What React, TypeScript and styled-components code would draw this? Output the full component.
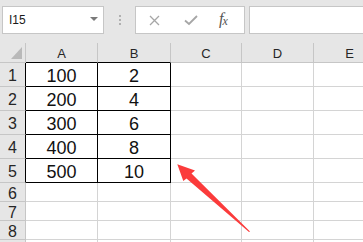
import styled, { createGlobalStyle } from "styled-components";

const GlobalStyle = createGlobalStyle`
  html, body {
    margin: 0;
    padding: 0;
    width: 363px;
    height: 242px;
    overflow: hidden;
    background: #ffffff;
    font-family: "Liberation Sans", Arial, sans-serif;
  }
`

const Page = styled.div`
  position: relative;
  width: 363px;
  height: 242px;
  overflow: hidden;
`

const Toolbar = styled.div`
  display: flex;
  align-items: flex-start;
  height: 43px;
  padding: 6px 0 0 2px;
  box-sizing: border-box;
  background: #e6e6e6;
`

const NameBox = styled.div`
  display: flex;
  align-items: center;
  justify-content: space-between;
  width: 102px;
  height: 28px;
  box-sizing: border-box;
  padding: 0 5px 0 6px;
  background: #ffffff;
  border: 1px solid #c6c6c6;
  font-size: 12px;
  color: #1a1a1a;
`

const Caret = styled.span`
  width: 0;
  height: 0;
  border-left: 4px solid transparent;
  border-right: 4px solid transparent;
  border-top: 4px solid #7a7a7a;
  margin-top: -2px;
`

const Grip = styled.div`
  display: flex;
  flex-direction: column;
  align-items: center;
  gap: 2px;
  width: 31px;
  padding-top: 9px;
  span {
    width: 2px;
    height: 2px;
    background: #b0b0b0;
  }
`

const IconBox = styled.div`
  display: flex;
  align-items: center;
  width: 110px;
  height: 28px;
  box-sizing: border-box;
  padding: 0 0 0 13px;
  background: #ffffff;
  border: 1px solid #c6c6c6;
  svg + svg {
    margin-left: 24px;
  }
`

const Fx = styled.span`
  margin-left: 21px;
  margin-top: -1px;
  font-family: "Liberation Serif", "Times New Roman", serif;
  font-style: italic;
  font-size: 16px;
  color: #555555;
  letter-spacing: -1px;
  sub {
    font-size: 12px;
    vertical-align: -1px;
  }
`

const FormulaInput = styled.div`
  flex: 1;
  height: 28px;
  margin-left: 4px;
  box-sizing: border-box;
  background: #ffffff;
  border: 1px solid #c6c6c6;
  border-right: none;
`

const Sheet = styled.div`
  display: grid;
  grid-template-columns: 26px 72px 73px 71px 72px 72px;
  grid-template-rows: 20px repeat(5, 24px) repeat(4, 19px);
`

const Cell = styled.div<{ $right?: string; $bottom?: string }>`
  display: flex;
  align-items: center;
  justify-content: center;
  box-sizing: border-box;
  border-right: 1px solid ${(p) => p.$right || "#d4d4d4"};
  border-bottom: 1px solid ${(p) => p.$bottom || "#d4d4d4"};
  background: #ffffff;
  color: #111111;
`

const ColHead = styled(Cell)`
  background: #e6e6e6;
  font-size: 13px;
  color: #262626;
  padding-top: 2px;
`

const Corner = styled(ColHead)`
  align-items: flex-end;
  justify-content: flex-end;
  padding: 0 3px 3px 0;
`

const RowHead = styled(Cell)`
  background: #e6e6e6;
  font-size: 16px;
  color: #262626;
  padding-top: 3px;
`

const DataCell = styled(Cell)`
  font-size: 18px;
  padding-top: 3px;
`

const Arrow = styled.svg`
  position: absolute;
  left: 0;
  top: 0;
  pointer-events: none;
`

const columns = ["A", "B", "C", "D", "E"]
const data = [
  [100, 2],
  [200, 4],
  [300, 6],
  [400, 8],
  [500, 10],
]

export default function App() {
  const rows = []
  for (let r = 1; r <= 9; r++) {
    const inRange = r <= 5
    rows.push(
      <RowHead key={"h" + r} $right={inRange ? "#000" : "#c6c6c6"} $bottom="#c6c6c6">
        {r < 9 ? r : ""}
      </RowHead>
    )
    columns.forEach((c, i) => {
      const black = inRange && i < 2
      rows.push(
        <DataCell key={c + r} $right={black ? "#000" : undefined} $bottom={black ? "#000" : undefined}>
          {black ? data[r - 1][i] : ""}
        </DataCell>
      )
    })
  }

  return (
    <>
      <GlobalStyle />
      <Page>
        <Toolbar>
          <NameBox>
            <span>I15</span>
            <Caret />
          </NameBox>
          <Grip>
            <span />
            <span />
            <span />
          </Grip>
          <IconBox>
            <svg width="11" height="11" viewBox="0 0 11 11">
              <path d="M1 1 L10 10 M10 1 L1 10" stroke="#a6a6a6" strokeWidth="1.3" />
            </svg>
            <svg width="14" height="12" viewBox="0 0 14 12">
              <path d="M1 6.5 L5 10 L13 2" stroke="#a6a6a6" strokeWidth="1.8" fill="none" />
            </svg>
            <Fx>
              f<sub>x</sub>
            </Fx>
          </IconBox>
          <FormulaInput />
        </Toolbar>
        <Sheet>
          <Corner $right="#c6c6c6" $bottom="#c6c6c6">
            <svg width="11" height="12" viewBox="0 0 11 12">
              <polygon points="11,0 11,12 0,12" fill="#b9b9b9" />
            </svg>
          </Corner>
          {columns.map((c, i) => (
            <ColHead key={c} $right="#c6c6c6" $bottom={i < 2 ? "#000" : "#c6c6c6"}>
              {c}
            </ColHead>
          ))}
          {rows}
        </Sheet>
        <Arrow width="363" height="242" viewBox="0 0 363 242">
          <polygon
            points="177.3,164.3 195,170.5 191.5,173.5 250,231.5 249,232 186.5,178.5 183.3,181"
            fill="#fb3b3b"
          />
        </Arrow>
      </Page>
    </>
  )
}
